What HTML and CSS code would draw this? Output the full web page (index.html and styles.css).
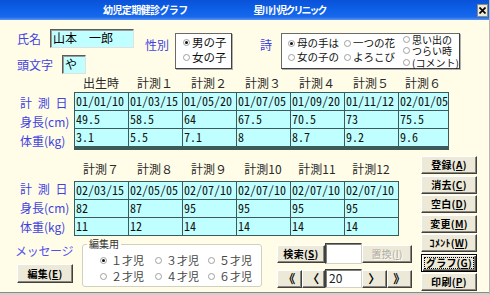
FILE: index.html
```html
<!DOCTYPE html>
<html lang="ja">
<head>
<meta charset="utf-8">
<title>幼児定期健診グラフ</title>
<link rel="stylesheet" href="styles.css">
</head>
<body>
<div class="window">
  <div class="titlebar">
    <span class="title-a">幼児定期健診グラフ</span>
    <span class="title-b">星川小児クリニック</span>
    <span class="close"><svg width="7" height="7" viewBox="0 0 7 7"><path d="M0.5 0.5 L6.5 6.5 M6.5 0.5 L0.5 6.5" stroke="#000" stroke-width="1.7"/></svg></span>
  </div>
  <div class="client">
    <div class="top">
      <div class="idcol">
        <div class="idrow"><span class="lbl lbl-name">氏名</span><div class="field field-name">山本　一郎</div></div>
        <div class="idrow"><span class="lbl lbl-init">頭文字</span><div class="field field-init">や</div></div>
      </div>
      <span class="lbl lbl-sex">性別</span>
      <div class="optbox sexbox">
        <div class="opt"><span class="radio on"></span>男の子</div>
        <div class="opt"><span class="radio"></span>女の子</div>
      </div>
      <span class="lbl lbl-poem">詩</span>
      <div class="optbox poembox">
        <div class="pcol pcol1">
          <div class="opt"><span class="radio on"></span>母の手は</div>
          <div class="opt"><span class="radio"></span>女の子の</div>
        </div>
        <div class="pcol pcol2">
          <div class="opt"><span class="radio"></span>一つの花</div>
          <div class="opt"><span class="radio"></span>よろこび</div>
        </div>
        <div class="pcol pcol3">
          <div class="opt"><span class="radio"></span>思い出の</div>
          <div class="opt"><span class="radio"></span>つらい時</div>
          <div class="opt"><span class="radio"></span>(コメント)</div>
        </div>
      </div>
    </div>

    <div class="sheet sheet1">
      <div class="heads heads7">
        <span>出生時</span><span>計測１</span><span>計測２</span><span>計測３</span><span>計測４</span><span>計測５</span><span>計測６</span>
      </div>
      <div class="datarow">
        <div class="rowlabels"><span>計 測 日</span><span>身長(cm)</span><span>体重(kg)</span></div>
        <div class="grid grid7">
          <span>01/01/10</span><span>01/03/15</span><span>01/05/20</span><span>01/07/05</span><span>01/09/20</span><span>01/11/12</span><span>02/01/05</span>
          <span>49.5</span><span>58.5</span><span>64</span><span>67.5</span><span>70.5</span><span>73</span><span>75.5</span>
          <span>3.1</span><span>5.5</span><span>7.1</span><span>8</span><span>8.7</span><span>9.2</span><span>9.6</span>
        </div>
      </div>
    </div>

    <div class="lower">
      <div class="lower-left">
        <div class="sheet sheet2">
          <div class="heads heads6">
            <span>計測７</span><span>計測８</span><span>計測９</span><span>計測10</span><span>計測11</span><span>計測12</span>
          </div>
          <div class="datarow">
            <div class="rowlabels"><span>計 測 日</span><span>身長(cm)</span><span>体重(kg)</span></div>
            <div class="grid grid6">
              <span>02/03/15</span><span>02/05/05</span><span>02/07/10</span><span>02/07/10</span><span>02/07/10</span><span>02/07/10</span>
              <span>82</span><span>87</span><span>95</span><span>95</span><span>95</span><span>95</span>
              <span>11</span><span>12</span><span>14</span><span>14</span><span>14</span><span>14</span>
            </div>
          </div>
        </div>

        <div class="bottom">
          <div class="msgcol">
            <span class="lbl lbl-msg">メッセージ</span>
            <button class="btn btn-edit">編集(<u>E</u>)</button>
          </div>
          <fieldset class="group">
            <legend>編集用</legend>
            <div class="agegrid">
              <div class="opt"><span class="radio on"></span>１才児</div>
              <div class="opt"><span class="radio"></span>３才児</div>
              <div class="opt"><span class="radio"></span>５才児</div>
              <div class="opt"><span class="radio"></span>２才児</div>
              <div class="opt"><span class="radio"></span>４才児</div>
              <div class="opt"><span class="radio"></span>６才児</div>
            </div>
          </fieldset>
          <div class="searchcol">
            <div class="srow">
              <button class="btn btn-search">検索(<u>S</u>)</button>
              <div class="box box-search"></div>
              <button class="btn btn-replace" disabled>置換(<u>I</u>)</button>
            </div>
            <div class="srow">
              <button class="btn nav nav-first">《</button>
              <button class="btn nav nav-prev">〈</button>
              <div class="box box-page">20</div>
              <button class="btn nav nav-next">〉</button>
              <button class="btn nav nav-last">》</button>
            </div>
          </div>
        </div>
      </div>

      <div class="btncol">
        <button class="btn">登録(<u>A</u>)</button>
        <button class="btn">消去(<u>C</u>)</button>
        <button class="btn">空白(<u>D</u>)</button>
        <button class="btn">変更(<u>M</u>)</button>
        <button class="btn">ｺﾒﾝﾄ(<u>W</u>)</button>
        <button class="btn btn-default">グラフ(<u>G</u>)</button>
        <button class="btn">印刷(<u>P</u>)</button>
      </div>
    </div>
  </div>
</div>
</body>
</html>
```

FILE: styles.css
```css
* { box-sizing: border-box; }
html, body { margin: 0; padding: 0; }
body {
  width: 490px;
  height: 295px;
  overflow: hidden;
  background: #fffde7;
  font-family: "Noto Sans CJK JP", "Noto Sans", sans-serif;
  color: #000;
}
.window {
  width: 490px;
  height: 295px;
  display: flex;
  flex-direction: column;
  background: #fffde7;
  border-right: 1px solid #b5b5b5;
  border-bottom: 2px solid #d4d0c8;
}

/* title bar */
.titlebar {
  height: 20px;
  flex: none;
  display: flex;
  align-items: center;
  background: linear-gradient(#0a52d8, #0c5fe6 45%, #1868ec 85%, #5b95f3);
  color: #fff;
  font-size: 10px;
  font-weight: bold;
  line-height: 12px;
  white-space: nowrap;
}
.title-a { margin-left: 103px; letter-spacing: -0.6px; }
.title-b { margin-left: 66px; letter-spacing: -2px; }
.close {
  margin-left: auto;
  margin-right: 1px;
  width: 11px;
  height: 13px;
  background: #ece9d8;
  border: 1px solid #8a8a8a;
  display: flex;
  align-items: center;
  justify-content: center;
}

.client {
  flex: 1;
  padding-top: 9px;
  border-bottom: 1px solid #8a8a8a;
}

/* top area */
.top { display: flex; align-items: flex-start; }
.idcol { display: flex; flex-direction: column; gap: 7px; padding-left: 17px; }
.idrow { display: flex; align-items: center; }
.lbl { color: #4242e2; font-size: 12px; line-height: 14px; white-space: nowrap; }
.lbl-name { width: 33px; }
.lbl-init { width: 45px; }
.field {
  height: 19px;
  background: #c0ffff;
  border: 1px solid;
  border-color: #5a5a5a #e0e0e0 #e0e0e0 #5a5a5a;
  box-shadow: inset 1px 1px 0 #9a9a9a;
  font-size: 12px;
  line-height: 16px;
  padding-left: 2px;
  white-space: nowrap;
}
.field-name { width: 84px; }
.field-init { width: 24px; }
.lbl-sex { margin: 9px 6px 0 11px; }
.lbl-poem { margin: 9px 9px 0 28px; }
.optbox {
  margin-top: 4px;
  height: 36px;
  background: #fff;
  border: 1px solid;
  border-color: #6a6a6a #404040 #404040 #6a6a6a;
  box-shadow: 1px 1px 0 #b0b0b0;
}
.sexbox { width: 57px; padding: 1px 0 0 7px; font-size: 11.5px; line-height: 15px; }
.poembox { width: 179px; display: flex; font-size: 10.5px; padding-left: 6px; }
.pcol1 { width: 56px; padding-top: 2px; line-height: 14px; }
.pcol2 { width: 59px; padding-top: 2px; line-height: 14px; }
.pcol3 { line-height: 11.3px; font-size: 10px; }

.opt { display: flex; align-items: center; white-space: nowrap; color: #111; }
.radio {
  width: 7px;
  height: 7px;
  border-radius: 50%;
  border: 1px solid #a0a0a0;
  background: #fff;
  margin-right: 2px;
  flex: none;
  position: relative;
}
.radio.on::after {
  content: "";
  position: absolute;
  left: 1px;
  top: 1px;
  width: 3px;
  height: 3px;
  border-radius: 50%;
  background: #111;
}

/* measurement sheets */
.heads { display: grid; margin-left: 74px; height: 16px; }
.heads span { text-align: center; font-size: 12px; line-height: 16px; color: #2a2a2a; white-space: nowrap; }
.heads7 { grid-template-columns: repeat(6, 54px) 50px; margin-top: 1px; }
.heads6 { grid-template-columns: repeat(6, 54px); margin-top: 11px; }
.datarow { display: flex; }
.sheet1 .datarow { margin-top: 1px; }
.sheet2 .datarow { margin-top: 4px; }
.rowlabels { width: 74px; padding-left: 20px; display: grid; grid-template-rows: repeat(3, 19px); align-content: start; }
.sheet1 .rowlabels { padding-top: 1px; }
.sheet2 .rowlabels { margin-top: -2px; }
.rowlabels span { color: #4242e2; font-size: 12px; line-height: 19px; white-space: nowrap; word-spacing: 3px; }
.grid { display: grid; grid-template-rows: repeat(3, 17px); gap: 1px; padding: 1px; background: #3d5a5a; }
.grid7 { grid-template-columns: repeat(6, 53px) 49px; }
.grid6 { grid-template-columns: repeat(6, 53px); }
.grid span {
  background: #c0ffff;
  font-size: 12px;
  line-height: 15px;
  padding-left: 1px;
  font-feature-settings: "hwid";
  overflow: hidden;
  white-space: nowrap;
  color: #111;
}

/* lower area */
.lower { display: flex; }
.lower-left { width: 421px; }
.btncol { width: 56px; margin-top: 6px; display: flex; flex-direction: column; gap: 1.5px; }
.btncol .btn { height: 18px; }

.btn {
  font-family: inherit;
  font-size: 10px;
  font-weight: bold;
  color: #000;
  background: #ece9d8;
  border: 1px solid;
  border-color: #fff #404040 #404040 #fff;
  box-shadow: inset -1px -1px 0 #8a877a;
  padding: 0;
  margin: 0;
  line-height: 14px;
  white-space: nowrap;
  display: flex;
  align-items: center;
  justify-content: center;
  letter-spacing: 0.3px;
}
.btn-default {
  border-color: #000;
  box-shadow: inset 1px 1px 0 #fff, inset -1px -1px 0 #404040, inset -2px -2px 0 #8a877a;
  outline: 1px dotted #000;
  outline-offset: -4px;
  letter-spacing: 0.2px;
}

.bottom { display: flex; align-items: flex-start; margin-top: 3px; }
.msgcol { width: 82px; padding-left: 15px; display: flex; flex-direction: column; align-items: flex-start; }
.lbl-msg { color: #5050f0; margin-top: 5px; letter-spacing: -0.3px; }
.btn-edit { width: 56px; height: 19px; margin-left: 2px; margin-top: 6px; }

.group {
  width: 180px;
  height: 48px;
  margin: 0;
  padding: 3px 0 0 0;
  border: 1px solid #d0d0bf;
  border-radius: 3px;
  background: #fff;
  min-width: 0;
}
.group legend { font-size: 10px; line-height: 10px; padding: 0 2px; margin-left: 4px; color: #333; }
.agegrid { display: grid; grid-template-columns: 55px 53px 60px; grid-auto-rows: 16px; padding-left: 17px; font-size: 11px; }
.agegrid .opt { line-height: 16px; color: #444; }
.agegrid .radio { margin-right: 4px; }

.searchcol { margin-left: 15px; padding-top: 4px; display: flex; flex-direction: column; gap: 5px; }
.srow { display: flex; align-items: center; }
.btn-search { width: 48px; height: 18px; }
.box {
  background: #fff;
  border: 1px solid;
  border-color: #404040 #d4d0c8 #d4d0c8 #404040;
  box-shadow: inset 1px 1px 0 #808080;
}
.box-search { width: 37px; height: 21px; }
.btn-replace { width: 50px; height: 18px; color: #aca899; text-shadow: 1px 1px 0 #fff; font-weight: normal; }
.box-page { width: 37px; height: 19px; font-size: 12px; line-height: 15px; padding-left: 3px; color: #222; }
.nav { height: 18px; font-size: 12px; }
.nav-first { width: 25px; }
.nav-prev { width: 23px; }
.nav-next { width: 25px; }
.nav-last { width: 25px; }
```
